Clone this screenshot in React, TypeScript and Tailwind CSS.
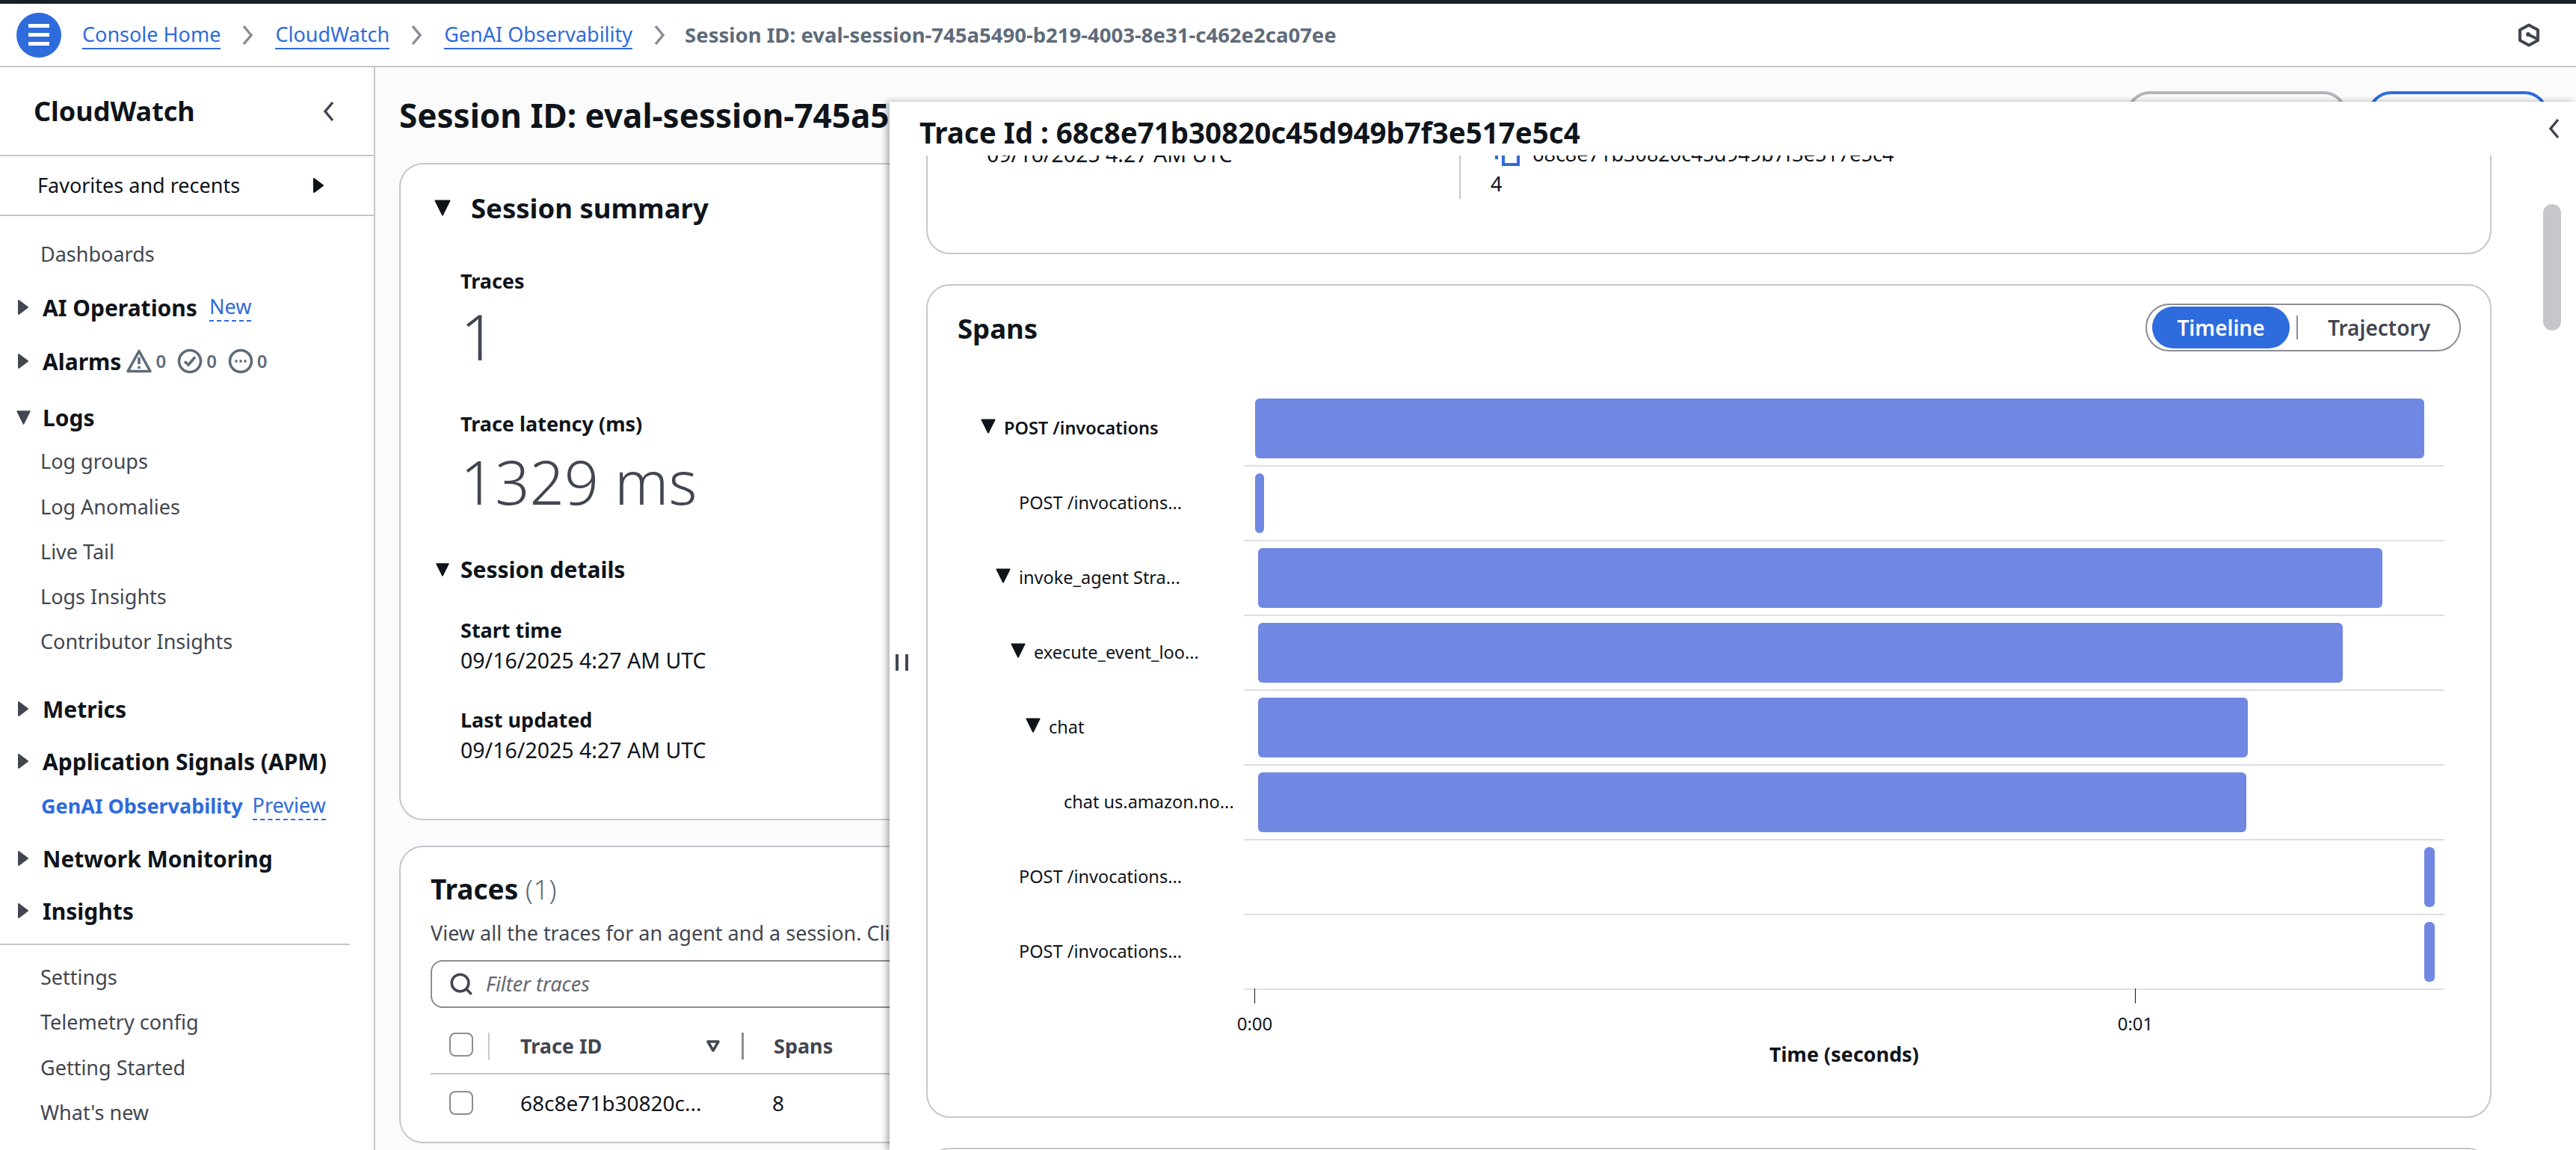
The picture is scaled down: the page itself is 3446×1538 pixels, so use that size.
import { Search } from "lucide-react"

const spanRows = [
  { label: "POST /invocations", depth: 0, open: true, bold: true, start: 15, width: 1564 },
  { label: "POST /invocations...", depth: 1, open: false, bold: false, start: 15, width: 12 },
  { label: "invoke_agent Stra...", depth: 1, open: true, bold: false, start: 19, width: 1504 },
  { label: "execute_event_loo...", depth: 2, open: true, bold: false, start: 19, width: 1451 },
  { label: "chat", depth: 3, open: true, bold: false, start: 19, width: 1324 },
  { label: "chat us.amazon.no...", depth: 4, open: false, bold: false, start: 19, width: 1322 },
  { label: "POST /invocations...", depth: 1, open: false, bold: false, start: 1579, width: 14 },
  { label: "POST /invocations...", depth: 1, open: false, bold: false, start: 1579, width: 14 },
]

function CaretRight({ className = "" }: { className?: string }) {
  return (
    <svg width="16" height="22" viewBox="0 0 16 22" className={className}>
      <path d="M2 2 L14 11 L2 20 Z" fill="currentColor" stroke="currentColor" strokeWidth="2" strokeLinejoin="round" />
    </svg>
  )
}

function CaretDown({ className = "", size = 20 }: { className?: string; size?: number }) {
  return (
    <svg width={size} height={size} viewBox="0 0 20 20" className={className}>
      <path d="M2 2 H18 L10 18 Z" fill="currentColor" stroke="currentColor" strokeWidth="1.5" strokeLinejoin="round" />
    </svg>
  )
}

function Chevron({ left = false, className = "" }: { left?: boolean; className?: string }) {
  return (
    <svg width="16" height="28" viewBox="0 0 16 28" className={className}>
      <path d={left ? "M13 2 L3 14 L13 26" : "M3 2 L13 14 L3 26"} fill="none" stroke="currentColor" strokeWidth="3.5" />
    </svg>
  )
}

function SectionRow({ label, open = false, className = "", children }: { label: string; open?: boolean; className?: string; children?: React.ReactNode }) {
  return (
    <div className={`flex h-[60px] items-center pl-[23px] ${className}`}>
      <div className="flex w-[34px] items-center text-[#424650]">
        {open ? <CaretDown size={21} className="-ml-[2px]" /> : <CaretRight />}
      </div>
      <span className="text-[30px] font-bold text-[#0f141a]">{label}</span>
      {children}
    </div>
  )
}

function NavLink({ label, className = "" }: { label: string; className?: string }) {
  return <div className={`flex h-[60px] items-center pl-[54px] text-[27px] text-[#424650] ${className}`}>{label}</div>
}

function AlarmCount() {
  return <span className="ml-[5px] text-[24px] font-semibold text-[#5f6b7a]">0</span>
}

function Sidebar() {
  return (
    <aside className="w-[502px] shrink-0 border-r-2 border-[#c6c6cd] bg-white">
      <div className="flex h-[117px] items-center justify-between border-b-0 pl-[45px] pr-[52px]">
        <span className="text-[36px] font-bold text-[#0f141a]">CloudWatch</span>
        <Chevron left className="text-[#424650]" />
      </div>
      <div className="flex h-[82px] items-center justify-between border-y-2 border-[#c6c6cd] pl-[50px] pr-[66px]">
        <span className="text-[27px] text-[#0f141a]">Favorites and recents</span>
        <CaretRight className="text-[#0f141a]" />
      </div>
      <NavLink label="Dashboards" className="mt-[21px]" />
      <SectionRow label="AI Operations" className="mt-[11px]">
        <span className="ml-[16px] border-b-2 border-dashed border-[#2e6bdc] text-[27px] leading-[36px] text-[#2e6bdc]">New</span>
      </SectionRow>
      <SectionRow label="Alarms" className="mt-[12px]">
        <svg width="34" height="32" viewBox="0 0 34 32" className="ml-[7px]" fill="none" stroke="#5f6b7a" strokeWidth="3.6" strokeLinejoin="round">
          <path d="M17 2.5 L32 29.5 H2 Z" />
          <path d="M17 11 V20 M17 23 V26" />
        </svg>
        <AlarmCount />
        <svg width="34" height="34" viewBox="0 0 34 34" className="ml-[15px]" fill="none" stroke="#5f6b7a" strokeWidth="3.6">
          <circle cx="17" cy="17" r="14.5" />
          <path d="M10 17.5 L15 22 L24 11.5" />
        </svg>
        <AlarmCount />
        <svg width="34" height="34" viewBox="0 0 34 34" className="ml-[15px]" fill="none" stroke="#5f6b7a" strokeWidth="3.6">
          <circle cx="17" cy="17" r="14.5" />
          <path d="M9.5 17 H12.5 M15.5 17 H18.5 M21.5 17 H24.5" />
        </svg>
        <AlarmCount />
      </SectionRow>
      <SectionRow label="Logs" open className="mt-[15px]" />
      <NavLink label="Log groups" className="-mt-[1px]" />
      <NavLink label="Log Anomalies" className="mt-[1px]" />
      <NavLink label="Live Tail" />
      <NavLink label="Logs Insights" />
      <NavLink label="Contributor Insights" />
      <SectionRow label="Metrics" className="mt-[30px]" />
      <SectionRow label="Application Signals (APM)" className="mt-[10px]" />
      <div className="flex h-[60px] items-center pl-[55px]">
        <span className="text-[27px] font-bold text-[#2e6bdc]">GenAI Observability</span>
        <span className="ml-[13px] border-b-2 border-dashed border-[#2e6bdc] text-[27px] leading-[36px] text-[#2e6bdc]">Preview</span>
      </div>
      <SectionRow label="Network Monitoring" className="mt-[10px]" />
      <SectionRow label="Insights" className="mt-[10px]" />
      <div className="mt-[14px] w-[468px] border-t-2 border-[#c6c6cd]" />
      <NavLink label="Settings" className="mt-[13px]" />
      <NavLink label="Telemetry config" />
      <NavLink label="Getting Started" className="mt-[1px]" />
      <NavLink label="What's new" />
    </aside>
  )
}

function Stat({ label, value, className = "" }: { label: string; value: string; className?: string }) {
  return (
    <div className={className}>
      <div className="text-[27px] leading-[40px] font-bold text-[#0f141a]">{label}</div>
      <div className="text-[28.5px] leading-[40px] text-[#0f141a]">{value}</div>
    </div>
  )
}

function MainContent() {
  return (
    <main className="min-w-0 flex-1 overflow-hidden bg-[#fbfbfc] pl-[32px] pr-[37px]">
      <div className="mt-[32px] flex h-[64px] items-center justify-between">
        <h1 className="text-[44px] font-bold whitespace-nowrap text-[#0f141a]">Session ID: eval-session-745a5490-b219-4003-8e31-c462e2ca07ee</h1>
        <div className="flex shrink-0 gap-[27px]">
          <div className="h-[64px] w-[296px] rounded-[32px] border-4 border-[#b4b4bb]" />
          <div className="h-[64px] w-[242px] rounded-[32px] border-4 border-[#2e6bdc]" />
        </div>
      </div>

      <section className="mt-[32px] h-[879px] rounded-[32px] border-2 border-[#c6c6cd] bg-white">
        <div className="flex h-[74px] items-center pl-[44px] pt-[42px]">
          <CaretDown size={24} className="text-[#0f141a]" />
          <span className="ml-[26px] text-[36.5px] font-bold text-[#0f141a]">Session summary</span>
        </div>
        <div className="mt-[62px] pl-[80px] text-[27px] leading-[40px] font-bold text-[#0f141a]">Traces</div>
        <div className="mt-[6px] pl-[80px] text-[84px] leading-[96px] font-light text-[#424650]">1</div>
        <div className="mt-[49px] pl-[80px] text-[27px] leading-[40px] font-bold text-[#0f141a]">Trace latency (ms)</div>
        <div className="mt-[3px] pl-[80px] text-[81px] leading-[108px] font-light text-[#424650]">1329 ms</div>
        <div className="mt-[44px] flex items-center pl-[46px]">
          <CaretDown className="text-[#0f141a]" />
          <span className="ml-[14px] text-[30px] leading-[40px] font-bold text-[#0f141a]">Session details</span>
        </div>
        <Stat label="Start time" value="09/16/2025 4:27 AM UTC" className="mt-[41px] pl-[80px]" />
        <Stat label="Last updated" value="09/16/2025 4:27 AM UTC" className="mt-[40px] pl-[80px]" />
      </section>

      <section className="mt-[34px] h-[398px] rounded-[32px] border-2 border-[#c6c6cd] bg-white pl-[40px]">
        <div className="mt-[32px] text-[37px] leading-[48px] font-bold text-[#0f141a]">
          Traces <span className="font-light text-[#5f6b7a]">(1)</span>
        </div>
        <p className="mt-[15px] text-[27px] leading-[40px] whitespace-nowrap text-[#424650]">View all the traces for an agent and a session. Click on a trace ID to view its spans.</p>
        <div className="mt-[16px] flex h-[64px] items-center rounded-[16px] border-2 border-[#8c8c94] pl-[22px]">
          <Search size={34} strokeWidth={2.5} className="text-[#424650]" />
          <span className="ml-[16px] text-[27px] text-[#656871] italic">Filter traces</span>
        </div>
        <div className="mt-[33px] flex h-[56px] items-start border-b-2 border-[#c6c6cd] pl-[25px]">
          <div className="h-[32px] w-[32px] rounded-[8px] border-2 border-[#8c8c94]" />
          <div className="ml-[20px] h-[36px] w-[2px] bg-[#c6c6cd]" />
          <span className="ml-[41px] w-[249px] text-[27px] leading-[36px] font-bold text-[#424650]">Trace ID</span>
          <svg width="18" height="16" viewBox="0 0 18 16" className="mt-[10px]" fill="none" stroke="#424650" strokeWidth="3.5" strokeLinejoin="round">
            <path d="M2 2 H16 L9 14 Z" />
          </svg>
          <div className="ml-[29px] h-[36px] w-[3px] bg-[#8c8c94]" />
          <span className="ml-[40px] text-[27px] leading-[36px] font-bold text-[#424650]">Spans</span>
        </div>
        <div className="mt-[22px] flex h-[32px] items-center pl-[25px]">
          <div className="h-[32px] w-[32px] rounded-[8px] border-2 border-[#8c8c94]" />
          <span className="ml-[63px] w-[337px] text-[28px] text-[#0f141a]">68c8e71b30820c...</span>
          <span className="text-[28px] text-[#0f141a]">8</span>
        </div>
      </section>
    </main>
  )
}

function SpansCard() {
  return (
    <section className="mt-[40px] h-[1115px] w-[2094px] rounded-[32px] border-2 border-[#c6c6cd] bg-white">
      <div className="flex h-[142px] items-start justify-between pl-[40px] pr-[39px] pt-[24px]">
        <h2 className="mt-[9px] text-[36.5px] leading-[48px] font-bold text-[#0f141a]">Spans</h2>
        <div className="flex h-[64px] w-[422px] items-center rounded-[32px] border-2 border-[#8c8c94] pl-[7px]">
          <div className="flex h-[56px] w-[184px] items-center justify-center rounded-[28px] bg-[#2e6bdc] text-[28px] font-semibold text-white">Timeline</div>
          <div className="ml-[9px] h-[32px] w-[2px] bg-[#8c8c94]" />
          <span className="ml-[40px] text-[28px] font-semibold text-[#424650]">Trajectory</span>
        </div>
      </div>
      {spanRows.map((row, i) => (
        <div key={i} className="flex h-[100px]">
          <div className="flex w-[423px] shrink-0 items-center" style={{ paddingLeft: 71 + row.depth * 20 }}>
            <div className="w-[31px] shrink-0 text-[#0f141a]">{row.open && <CaretDown size={22} className="-mt-[8px] -ml-[1px]" />}</div>
            <span className={`-mt-[3px] text-[23.5px] whitespace-nowrap text-[#0f141a] ${row.bold ? "font-semibold" : ""}`}>{row.label}</span>
          </div>
          <div className="w-[1606px] border-b-2 border-[#dedee3] pt-[9px]">
            <div className="h-[80px] rounded-[6px] bg-[#7088e2]" style={{ marginLeft: row.start, width: row.width }} />
          </div>
        </div>
      ))}
      <div className="flex">
        <div className="w-[423px] shrink-0" />
        <div className="w-[1606px]">
          <div className="flex">
            <div className="ml-[14px] flex w-px flex-col items-center">
              <div className="-mt-[2px] h-[20px] w-px shrink-0 bg-[#0f141a]" />
              <span className="mt-[11px] text-[24px] leading-[32px] text-[#0f141a]">0:00</span>
            </div>
            <div className="ml-[1177px] flex w-px flex-col items-center">
              <div className="-mt-[2px] h-[20px] w-px shrink-0 bg-[#0f141a]" />
              <span className="mt-[11px] text-[24px] leading-[32px] text-[#0f141a]">0:01</span>
            </div>
          </div>
          <div className="mt-[7px] text-center text-[27px] leading-[36px] font-bold text-[#0f141a]">Time (seconds)</div>
        </div>
      </div>
    </section>
  )
}

function TracePanel() {
  return (
    <div className="absolute top-[136px] right-0 bottom-0 left-[1190px] bg-white shadow-[-4px_0_8px_rgba(0,0,0,0.3)]">
      <div className="flex h-[72px] items-center justify-between pl-[40px] pr-[21px]">
        <h2 className="mt-[12px] text-[38.5px] font-bold whitespace-nowrap text-[#0f141a]">Trace Id : 68c8e71b30820c45d949b7f3e517e5c4</h2>
        <Chevron left className="text-[#424650]" />
      </div>
      <div className="h-[1330px] overflow-hidden pl-[49px]">
        <section className="-mt-[120px] flex h-[252px] w-[2094px] rounded-[32px] border-2 border-[#c6c6cd] pt-[10px]">
          <div className="w-[711px] pl-[79px] pt-[86px] text-[28.5px] leading-[40px] text-[#0f141a]">09/16/2025 4:27 AM UTC</div>
          <div className="h-[166px] border-l-2 border-[#c6c6cd] pl-[40px] pt-[86px] text-[27px] leading-[40px] text-[#0f141a]">
            <div className="flex items-center">
              <svg width="42" height="34" viewBox="0 0 42 34" className="mt-[6px] ml-[6px]" fill="none" stroke="#2e6bdc" strokeWidth="4">
                <path d="M2 0 V21" />
                <rect x="11" y="8" width="20" height="20" />
              </svg>
              <span className="ml-[8px]">68c8e71b30820c45d949b7f3e517e5c4</span>
            </div>
            <div>4</div>
          </div>
        </section>
        <SpansCard />
        <section className="mt-[40px] h-[40px] w-[2094px] rounded-t-[32px] border-2 border-[#c6c6cd]" />
      </div>
      {/* drag handle and scrollbar sit on top of the panel */}
      <div className="absolute top-[739px] left-[8px] flex h-[22px] gap-[9px]">
        <div className="h-full w-[4px] bg-[#414750]" />
        <div className="h-full w-[4px] bg-[#414750]" />
      </div>
      <div className="absolute top-[137px] right-[20px] h-[169px] w-[24px] rounded-full bg-[#c6c6cd]" />
    </div>
  )
}

export default function App() {
  return (
    <div className="relative flex h-[1538px] w-[3446px] flex-col overflow-hidden bg-white [font-family:'Noto_Sans',sans-serif]">
      <div className="h-[5px] shrink-0 bg-[#161d26]" />
      <header className="flex h-[85px] shrink-0 items-center border-b-2 border-[#c6c6cd] pl-[22px] pr-[48px]">
        <button className="flex h-[60px] w-[60px] flex-col items-center justify-center gap-[7px] rounded-full bg-[#2e6bdc]">
          <span className="h-[5px] w-[28px] bg-white" />
          <span className="h-[5px] w-[28px] bg-white" />
          <span className="h-[5px] w-[28px] bg-white" />
        </button>
        <a className="ml-[28px] border-b-2 border-[#2e6bdc] text-[27px] leading-[36px] text-[#2e6bdc]">Console Home</a>
        <Chevron className="ml-[28px] text-[#8c8c94]" />
        <a className="ml-[29px] border-b-2 border-[#2e6bdc] text-[27px] leading-[36px] text-[#2e6bdc]">CloudWatch</a>
        <Chevron className="ml-[28px] text-[#8c8c94]" />
        <a className="ml-[29px] border-b-2 border-[#2e6bdc] text-[27px] leading-[36px] text-[#2e6bdc]">GenAI Observability</a>
        <Chevron className="ml-[28px] text-[#8c8c94]" />
        <span className="ml-[26px] text-[27.5px] font-bold text-[#5f6b7a]">Session ID: eval-session-745a5490-b219-4003-8e31-c462e2ca07ee</span>
        <svg width="30" height="32" viewBox="0 0 30 32" className="ml-auto" fill="none" stroke="#414750" strokeWidth="4">
          <path d="M15 2.5 L27 9 V23 L15 29.5 L3 23 V9 Z" strokeLinejoin="round" />
          <circle cx="14" cy="15" r="3" fill="#414750" stroke="none" />
          <path d="M14 15 L26 21" />
        </svg>
      </header>
      <div className="flex min-h-0 flex-1">
        <Sidebar />
        <MainContent />
      </div>
      <TracePanel />
    </div>
  )
}
